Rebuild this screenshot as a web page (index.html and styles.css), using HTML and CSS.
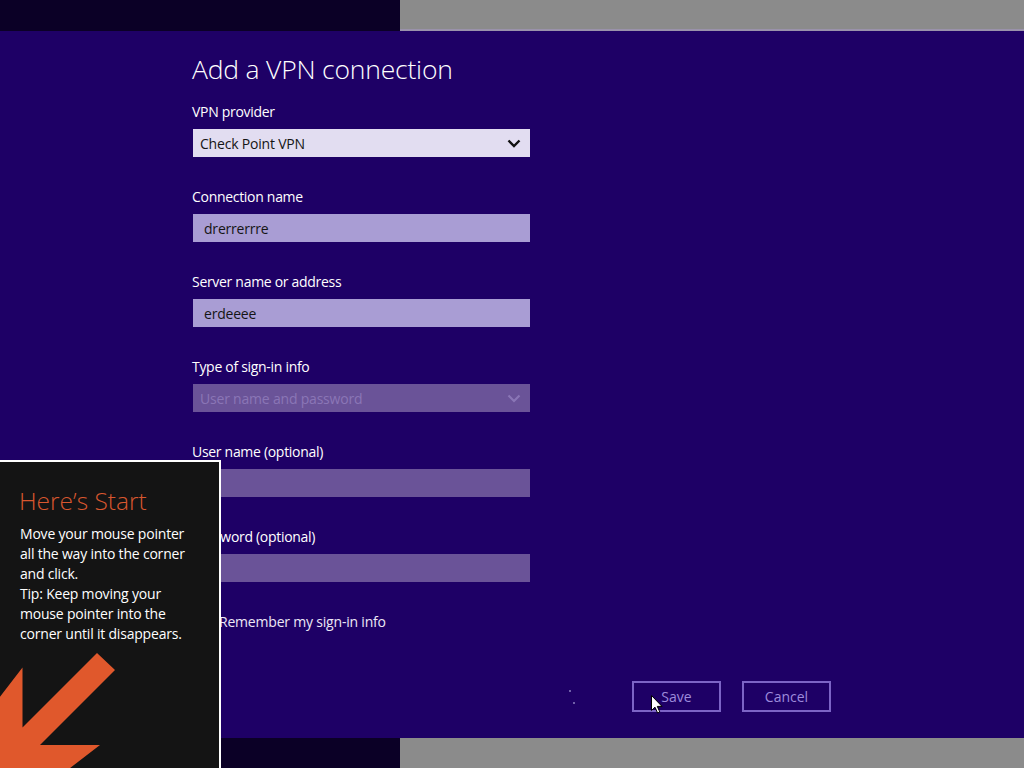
FILE: index.html
```html
<!DOCTYPE html>
<html lang="en">
<head>
    <meta charset="UTF-8">
    <title>Add a VPN connection</title>
    <link rel="stylesheet" href="styles.css">
</head>
<body>
    <div class="strip">
        <div class="strip-dark"></div>
        <div class="strip-grey top"></div>
    </div>

    <div class="main">
        <form class="vpn-form">
            <h1>Add a VPN connection</h1>

            <div class="field">
                <label>VPN provider</label>
                <div class="select">
                    <span>Check Point VPN</span>
                    <svg class="chevron" viewBox="0 0 14 9" width="14" height="9"><path d="M1.5 1.5 L7 7 L12.5 1.5" fill="none" stroke="#111" stroke-width="2.4"/></svg>
                </div>
            </div>

            <div class="field">
                <label>Connection name</label>
                <div class="input">drerrerrre</div>
            </div>

            <div class="field">
                <label>Server name or address</label>
                <div class="input">erdeeee</div>
            </div>

            <div class="field">
                <label>Type of sign-in info</label>
                <div class="select disabled">
                    <span>User name and password</span>
                    <svg class="chevron" viewBox="0 0 14 9" width="14" height="9"><path d="M1.5 1.5 L7 7 L12.5 1.5" fill="none" stroke="#8a76b6" stroke-width="2.2"/></svg>
                </div>
            </div>

            <div class="field">
                <label>User name (optional)</label>
                <div class="input disabled"></div>
            </div>

            <div class="field">
                <label>Password (optional)</label>
                <div class="input disabled"></div>
            </div>

            <div class="check-row">
                <span class="checkbox"></span>
                <span>Remember my sign-in info</span>
            </div>

            <div class="buttons">
                <span class="dots"><i></i><i></i></span>
                <button type="button" class="btn">Save</button>
                <button type="button" class="btn">Cancel</button>
            </div>
        </form>

        <svg class="cursor" viewBox="0 0 12 19" width="12" height="19">
            <path d="M0.5 0.5 L0.5 15.5 L4 12.2 L6.6 18 L8.8 17 L6.3 11.4 L11 11.4 Z" fill="#fff" stroke="#000" stroke-width="1"/>
        </svg>
    </div>

    <div class="strip bottom">
        <div class="strip-dark"></div>
        <div class="strip-grey"></div>
    </div>

    <div class="start-tip">
        <svg class="tip-arrow" viewBox="0 462 219 306" width="219" height="306">
            <polygon points="97,653 115,670 40,745 100,745 61,775 -8,775 -8,707 22.5,667.5 22.5,727.5" fill="#e0582c"/>
        </svg>
        <h2>Here’s Start</h2>
        <p>Move your mouse pointer all the way into the corner and click.<br>Tip: Keep moving your mouse pointer into the corner until it disappears.</p>
    </div>
</body>
</html>
```

FILE: styles.css
```css
* {
    margin: 0;
    padding: 0;
    box-sizing: border-box;
}
html, body {
    height: 100%;
}
body {
    width: 1024px;
    height: 768px;
    overflow: hidden;
    display: flex;
    flex-direction: column;
    font-family: "Open Sans", "Noto Sans", sans-serif;
    background-color: #1e0066;
    color: #fff;
    position: relative;
}
.strip {
    display: flex;
    height: 31px;
}
.strip.bottom {
    height: 30px;
}
.strip-dark {
    width: 400px;
    background-color: #0b0026;
}
.strip-grey {
    flex: 1;
    background-color: #8b8b8b;
}
.strip-grey.top {
    border-bottom: 2px solid #9a92ab;
}
.main {
    flex: 1;
    position: relative;
    padding: 20px 0 0 192px;
}
.vpn-form {
    width: 639px;
}
.vpn-form h1 {
    font-size: 26.5px;
    font-weight: 300;
    line-height: 36px;
    margin-bottom: 15px;
    letter-spacing: -0.2px;
}
.field {
    margin-bottom: 30px;
}
.field label {
    display: block;
    font-size: 14px;
    line-height: 20px;
    margin-bottom: 7px;
    letter-spacing: -0.3px;
}
.select, .input {
    margin-left: 1px;
    width: 337px;
    height: 28px;
    display: flex;
    align-items: center;
    font-size: 14px;
    color: #151515;
    letter-spacing: -0.2px;
}
.select {
    background-color: #e2ddf1;
    justify-content: space-between;
    padding: 0 9px 0 7px;
}
.input {
    background-color: #a99dd4;
    padding: 0 11px;
}
.select.disabled, .input.disabled {
    background-color: #6a5398;
    color: #8a76b6;
}
.chevron {
    display: block;
}
.check-row {
    display: flex;
    align-items: center;
    gap: 6px;
    font-size: 14px;
    line-height: 20px;
    color: #ece8f6;
    letter-spacing: -0.2px;
}
.checkbox {
    width: 20px;
    height: 20px;
    margin-left: 1px;
    background-color: #e2ddf1;
}
.buttons {
    display: flex;
    justify-content: flex-end;
    align-items: center;
    gap: 21px;
    margin-top: 49px;
}
.btn {
    width: 89px;
    height: 31px;
    background: transparent;
    border: 2px solid #7c64c6;
    color: #9d8bdc;
    font-family: inherit;
    font-size: 14px;
}
.dots {
    display: flex;
    gap: 2px;
    margin-right: 36px;
    height: 14px;
}
.dots i {
    width: 2px;
    height: 2px;
    background-color: #6f5fa8;
}
.dots i:last-child {
    align-self: flex-end;
}
.cursor {
    position: absolute;
    left: 651px;
    top: 664px;
}
.start-tip {
    position: absolute;
    left: 0;
    bottom: 0;
    width: 221px;
    height: 308px;
    background-color: #141414;
    border-top: 2px solid #fff;
    border-right: 2px solid #fff;
    padding: 24px 0 0 19px;
    overflow: hidden;
}
.tip-arrow {
    position: absolute;
    left: 0;
    top: 0;
}
.start-tip h2 {
    font-size: 24.5px;
    font-weight: 300;
    line-height: 30px;
    color: #d8572f;
    margin-bottom: 8px;
}
.start-tip p {
    position: relative;
    font-size: 14px;
    line-height: 20px;
    padding-left: 1px;
    width: 180px;
    letter-spacing: -0.2px;
}
```
